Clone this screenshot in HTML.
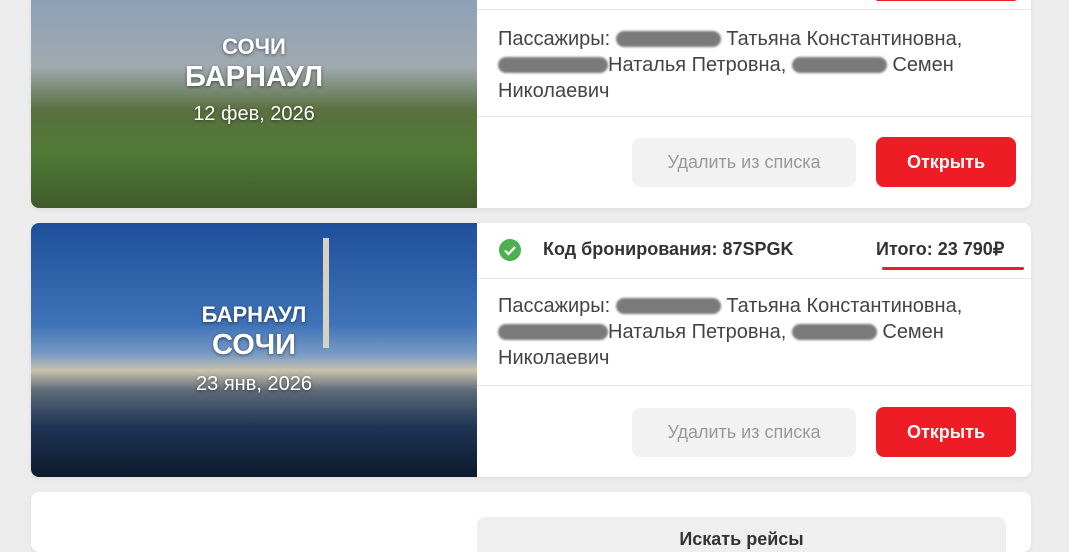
<!DOCTYPE html>
<html><head><meta charset="utf-8"><style>
*{margin:0;padding:0;box-sizing:border-box}
body{width:1069px;height:540px;background:#ececec;font-family:"Liberation Sans",sans-serif;position:relative;overflow:hidden;color:#333}
.card{position:absolute;left:31px;width:1000px;background:#fff;border-radius:8px;overflow:hidden;box-shadow:0 2px 4px rgba(0,0,0,.06)}
.img{position:absolute;left:0;top:0;width:446px;height:100%;color:#fff;text-align:center}
.t{position:absolute;left:0;width:446px;text-align:center;text-shadow:0 1px 3px rgba(0,0,0,.5)}
.sep{position:absolute;left:446px;right:0;height:1px;background:#e6e6e6}
.pas{position:absolute;left:467px;font-size:20px;line-height:26px;color:#444;width:520px}
.blur{display:inline-block;background:#7a7a7a;height:16px;border-radius:8px;vertical-align:-2px;filter:blur(1px)}
.btn1{position:absolute;left:601px;width:224px;height:49px;background:#f2f2f2;border-radius:8px;color:#999;font-size:18px;text-align:center;line-height:49px}
.btn2{position:absolute;left:845px;width:140px;height:50px;background:#ee1c25;border-radius:8px;color:#fff;font-size:18px;font-weight:bold;text-align:center;line-height:50px}
</style></head><body>
<div class="card" style="top:-10px;height:218px">
 <div class="img" style="background:linear-gradient(180deg,#8aa0b8 0%,#a0aab0 35%,#5a7040 55%,#4f7a35 75%,#3f5a2a 100%)">
  <div class="t" style="top:44px;font-size:22px;font-weight:bold">СОЧИ</div>
  <div class="t" style="top:71px;font-size:29px;font-weight:bold">БАРНАУЛ</div>
  <div class="t" style="top:113px;font-size:20px">12 фев, 2026</div>
 </div>
 <div style="position:absolute;left:845px;top:8px;width:140px;height:3px;background:#ee1c25;border-radius:2px"></div>
 <div class="sep" style="top:19px"></div>
 <div class="pas" style="top:36px">Пассажиры: <span class="blur" style="width:105px"></span> Татьяна Константиновна,<br><span class="blur" style="width:110px"></span>Наталья Петровна, <span class="blur" style="width:95px"></span> Семен<br>Николаевич</div>
 <div class="sep" style="top:126px"></div>
 <div class="btn1" style="top:148px">Удалить из списка</div>
 <div class="btn2" style="top:147px">Открыть</div>
</div>
<div class="card" style="top:223px;height:254px">
 <div class="img" style="background:linear-gradient(180deg,#1f4f9a 0%,#3f73b8 40%,#7a9cc4 52%,#c9c2ad 58%,#5d6a78 66%,#1f3556 80%,#0c1a2c 100%)">
  <div style="position:absolute;left:292px;top:15px;width:6px;height:110px;background:#d8d2c4"></div>
  <div class="t" style="top:79px;font-size:22px;font-weight:bold">БАРНАУЛ</div>
  <div class="t" style="top:106px;font-size:29px;font-weight:bold">СОЧИ</div>
  <div class="t" style="top:150px;font-size:20px">23 янв, 2026</div>
 </div>
 <svg style="position:absolute;left:468px;top:16px" width="22" height="22"><circle cx="11" cy="11" r="11" fill="#4caf50"/><path d="M6 11.5l3.5 3.5L16 8" stroke="#fff" stroke-width="2.2" fill="none"/></svg>
 <div style="position:absolute;left:512px;top:16px;font-size:18px;font-weight:bold;color:#333">Код бронирования: 87SPGK</div>
 <div style="position:absolute;left:845px;top:16px;font-size:18px;font-weight:bold;color:#333">Итого: 23 790₽</div>
 <div style="position:absolute;left:851px;top:44px;width:142px;height:3px;background:#ee1c25;border-radius:2px"></div>
 <div class="sep" style="top:55px"></div>
 <div class="pas" style="top:70px">Пассажиры: <span class="blur" style="width:105px"></span> Татьяна Константиновна,<br><span class="blur" style="width:110px"></span>Наталья Петровна, <span class="blur" style="width:85px"></span> Семен<br>Николаевич</div>
 <div class="sep" style="top:162px"></div>
 <div class="btn1" style="top:185px">Удалить из списка</div>
 <div class="btn2" style="top:184px">Открыть</div>
</div>
<div class="card" style="top:492px;height:60px">
 <div style="position:absolute;left:446px;top:25px;width:529px;height:60px;background:#efefef;border-radius:8px;text-align:center;font-size:18px;font-weight:bold;padding-top:12px">Искать рейсы</div>
</div>
</body></html>
